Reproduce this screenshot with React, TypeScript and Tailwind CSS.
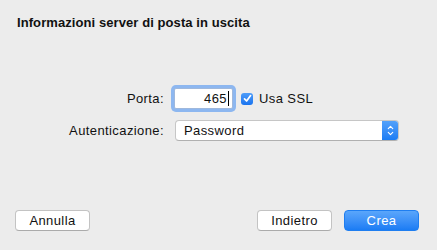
import { ChevronDown, ChevronUp } from 'lucide-react';

const font = { fontFamily: '"Liberation Sans", Arial, sans-serif' };

function Button({ label, primary = false }: { label: string; primary?: boolean }) {
  return (
    <button
      className={
        primary
          ? 'w-[75px] h-[21px] rounded-[4px] bg-gradient-to-b from-[#5aa6fb] to-[#1a7cf4] border border-[#1f7ef0] text-white text-[13px] tracking-[0.4px] leading-none'
          : 'w-[75px] h-[21px] rounded-[4px] bg-white border border-[#c3c3c3] border-b-[#ababab] text-[#111] text-[13px] tracking-[0.4px] leading-none'
      }
    >
      {label}
    </button>
  );
}

export default function App() {
  return (
    <div className="w-[437px] h-[250px] bg-[#ececec] flex flex-col text-[#111]" style={font}>
      {/* Title */}
      <h1 className="pt-[15px] pl-[17px] text-[13px] leading-[16px] font-bold tracking-[0.08px]">
        Informazioni server di posta in uscita
      </h1>

      {/* Porta row */}
      <div className="mt-[57px] flex items-center h-[21px] tracking-[0.4px]">
        <div className="w-[164px] text-right text-[13px]">Porta:</div>
        <div className="ml-[10px] w-[59px] h-[21px] bg-white rounded-[2px] border border-[#9fb8dc] shadow-[0_0_0_3px_#8db7f0] flex items-center justify-end pr-[3px]">
          <span className="text-[13px] leading-none">465</span>
          <span className="ml-[1px] w-px h-[15px] bg-black" />
        </div>
        <div className="ml-[8px] w-[12px] h-[12px] rounded-[3px] bg-gradient-to-b from-[#4d9cf9] to-[#1874ef] flex items-center justify-center">
          <svg width="9" height="9" viewBox="0 0 9 9" fill="none">
            <path d="M1.5 4.8 L3.6 7 L7.6 1.6" stroke="white" strokeWidth="1.7" strokeLinecap="round" strokeLinejoin="round" />
          </svg>
        </div>
        <span className="ml-[6px] text-[13px]">Usa SSL</span>
      </div>

      {/* Autenticazione row */}
      <div className="mt-[11px] flex items-center h-[21px] tracking-[0.4px]">
        <div className="w-[164px] text-right text-[13px]">Autenticazione:</div>
        <div className="ml-[11px] w-[224px] h-[21px] bg-white rounded-[4px] border border-[#c6c6c6] border-b-[#b0b0b0] flex items-center overflow-hidden">
          <span className="flex-1 pl-[8px] text-[13px]">Password</span>
          <div className="w-[16px] h-full bg-gradient-to-b from-[#53a1fa] to-[#1a7cf4] flex flex-col items-center justify-center -space-y-[3px]">
            <ChevronUp size={9} strokeWidth={3} color="white" />
            <ChevronDown size={9} strokeWidth={3} color="white" />
          </div>
        </div>
      </div>

      {/* Buttons */}
      <div className="mt-auto mb-[18px] px-[15px] flex items-center">
        <Button label="Annulla" />
        <div className="flex-1" />
        <Button label="Indietro" />
        <div className="ml-[12px] mr-[3px]">
          <Button label="Crea" primary />
        </div>
      </div>
    </div>
  );
}
